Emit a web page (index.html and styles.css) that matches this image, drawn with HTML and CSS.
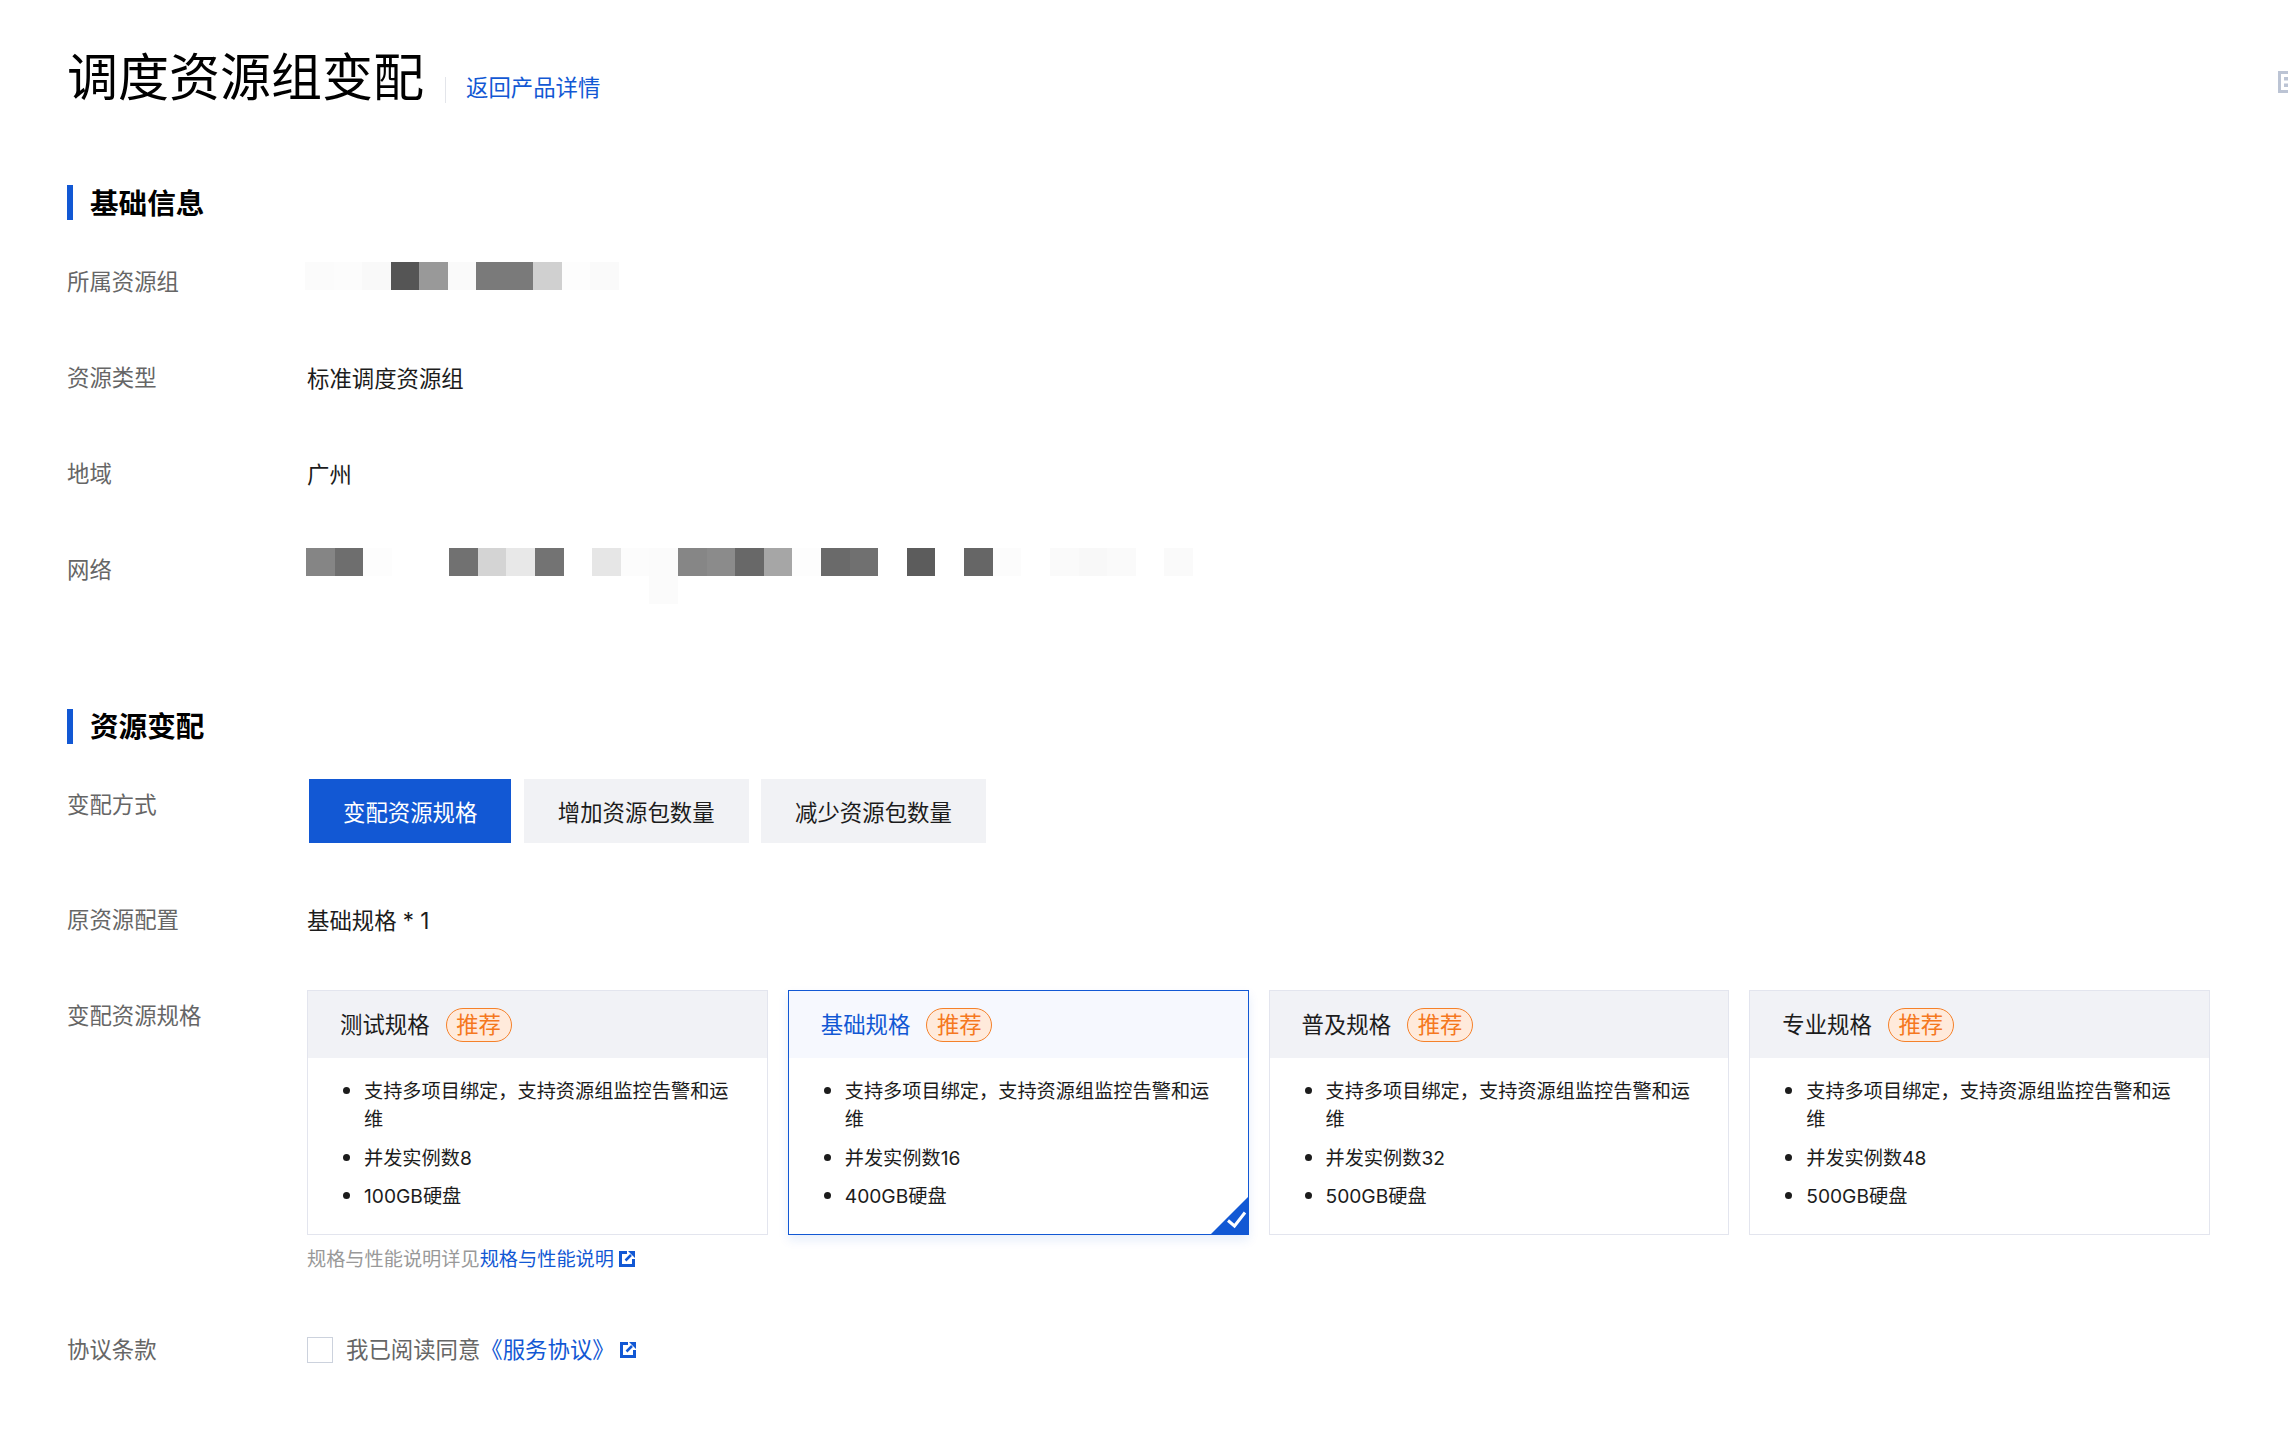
FILE: index.html
```html
<!DOCTYPE html>
<html lang="zh-CN">
<head>
    <meta charset="UTF-8">
    <meta name="viewport" content="width=device-width, initial-scale=1.0">
    <title>调度资源组变配</title>
    <link rel="stylesheet" href="styles.css">
</head>
<body>
    <svg class="side-icon" viewBox="0 0 10 22" aria-hidden="true">
        <path d="M10 1.5H1.5V20.5H10" fill="none" stroke="#bcc4d4" stroke-width="3"/>
        <rect x="6" y="6" width="4" height="3.5" fill="#bcc4d4"/>
        <rect x="6" y="12.5" width="4" height="3.5" fill="#bcc4d4"/>
    </svg>

    <!-- header -->
    <header class="page-head">
        <h1>调度资源组变配</h1>
        <span class="head-divider"></span>
        <a class="link" href="#">返回产品详情</a>
    </header>

    <!-- basic info -->
    <h2 class="section-title">基础信息</h2>
    <div class="row">
        <div class="label">所属资源组</div>
        <div class="value">
            <svg class="mosaic" width="314" height="28" viewBox="0 0 11 1" preserveAspectRatio="none" shape-rendering="crispEdges" aria-hidden="true">
                <rect x="0" width="1" height="1" fill="#fbfbfb"/>
                <rect x="1" width="1" height="1" fill="#fcfcfc"/>
                <rect x="2" width="1" height="1" fill="#f9f9f9"/>
                <rect x="3" width="1" height="1" fill="#555"/>
                <rect x="4" width="1" height="1" fill="#999"/>
                <rect x="5" width="1" height="1" fill="#fafafa"/>
                <rect x="6" width="2" height="1" fill="#7a7a7a"/>
                <rect x="8" width="1" height="1" fill="#d0d0d0"/>
                <rect x="9" width="1" height="1" fill="#fdfdfd"/>
                <rect x="10" width="1" height="1" fill="#fafafa"/>
            </svg>
        </div>
    </div>
    <div class="row">
        <div class="label">资源类型</div>
        <div class="value">标准调度资源组</div>
    </div>
    <div class="row">
        <div class="label">地域</div>
        <div class="value">广州</div>
    </div>
    <div class="row">
        <div class="label">网络</div>
        <div class="value">
            <svg class="mosaic mosaic-net" width="887" height="56" viewBox="0 0 31 2" preserveAspectRatio="none" shape-rendering="crispEdges" aria-hidden="true">
                <rect x="0" width="1" height="1" fill="#858585"/>
                <rect x="1" width="1" height="1" fill="#6e6e6e"/>
                <rect x="2" width="1" height="1" fill="#fdfdfd"/>
                <rect x="5" width="1" height="1" fill="#717171"/>
                <rect x="6" width="1" height="1" fill="#d4d4d4"/>
                <rect x="7" width="1" height="1" fill="#e8e8e8"/>
                <rect x="8" width="1" height="1" fill="#737373"/>
                <rect x="10" width="1" height="1" fill="#e6e6e6"/>
                <rect x="11" width="1" height="1" fill="#fcfcfc"/>
                <rect x="12" width="1" height="2" fill="#fbfbfb"/>
                <rect x="13" width="1" height="1" fill="#868686"/>
                <rect x="14" width="1" height="1" fill="#8b8b8b"/>
                <rect x="15" width="1" height="1" fill="#686868"/>
                <rect x="16" width="1" height="1" fill="#a6a6a6"/>
                <rect x="17" width="1" height="1" fill="#fdfdfd"/>
                <rect x="18" width="1" height="1" fill="#6a6a6a"/>
                <rect x="19" width="1" height="1" fill="#707070"/>
                <rect x="21" width="1" height="1" fill="#5c5c5c"/>
                <rect x="23" width="1" height="1" fill="#666"/>
                <rect x="24" width="1" height="1" fill="#fcfcfc"/>
                <rect x="26" width="1" height="1" fill="#fafafa"/>
                <rect x="27" width="1" height="1" fill="#f8f8f8"/>
                <rect x="28" width="1" height="1" fill="#fafafa"/>
                <rect x="30" width="1" height="1" fill="#fafafa"/>
            </svg>
        </div>
    </div>

    <!-- resource change -->
    <h2 class="section-title section-second">资源变配</h2>
    <div class="row row-mode">
        <div class="label label-top">变配方式</div>
        <div class="tabs">
            <button class="tab tab-active">变配资源规格</button>
            <button class="tab">增加资源包数量</button>
            <button class="tab">减少资源包数量</button>
        </div>
    </div>
    <div class="row row-origin">
        <div class="label">原资源配置</div>
        <div class="value">基础规格 * 1</div>
    </div>
    <div class="row row-spec">
        <div class="label label-top">变配资源规格</div>
        <div class="spec-wrap">
            <div class="cards">
                <div class="card">
                    <div class="card-head">测试规格<span class="tag">推荐</span></div>
                    <ul class="card-list">
                        <li>支持多项目绑定，支持资源组监控告警和运维</li>
                        <li>并发实例数8</li>
                        <li>100GB硬盘</li>
                    </ul>
                </div>
                <div class="card card-active">
                    <div class="card-head">基础规格<span class="tag">推荐</span></div>
                    <ul class="card-list">
                        <li>支持多项目绑定，支持资源组监控告警和运维</li>
                        <li>并发实例数16</li>
                        <li>400GB硬盘</li>
                    </ul>
                    <svg class="card-check" width="39" height="39" viewBox="0 0 39 39" aria-hidden="true">
                        <path d="M39 0V39H0z" fill="#1258d4"/>
                        <path d="M18 24.5L24.5 30L35 16.5" fill="none" stroke="#fff" stroke-width="3"/>
                    </svg>
                </div>
                <div class="card">
                    <div class="card-head">普及规格<span class="tag">推荐</span></div>
                    <ul class="card-list">
                        <li>支持多项目绑定，支持资源组监控告警和运维</li>
                        <li>并发实例数32</li>
                        <li>500GB硬盘</li>
                    </ul>
                </div>
                <div class="card">
                    <div class="card-head">专业规格<span class="tag">推荐</span></div>
                    <ul class="card-list">
                        <li>支持多项目绑定，支持资源组监控告警和运维</li>
                        <li>并发实例数48</li>
                        <li>500GB硬盘</li>
                    </ul>
                </div>
            </div>
            <p class="hint">规格与性能说明详见<a class="link" href="#">规格与性能说明</a>
                <svg class="ext-icon" width="16" height="16" viewBox="0 0 16 16" aria-hidden="true">
                    <path d="M8 1.5H1.5V14.5H14.5V8" fill="none" stroke="#1258d4" stroke-width="3"/>
                    <path d="M6.5 9.5L12 4" fill="none" stroke="#1258d4" stroke-width="2.5"/>
                    <path d="M9 0H16V7z" fill="#1258d4"/>
                </svg>
            </p>
        </div>
    </div>
    <div class="row row-agree">
        <div class="label">协议条款</div>
        <div class="value agree">
            <span class="checkbox"></span>
            <span class="agree-text">我已阅读同意</span><a class="link" href="#">《服务协议》</a>
            <svg class="ext-icon" width="16" height="16" viewBox="0 0 16 16" aria-hidden="true">
                <path d="M8 1.5H1.5V14.5H14.5V8" fill="none" stroke="#1258d4" stroke-width="3"/>
                <path d="M6.5 9.5L12 4" fill="none" stroke="#1258d4" stroke-width="2.5"/>
                <path d="M9 0H16V7z" fill="#1258d4"/>
            </svg>
        </div>
    </div>
</body>
</html>
```

FILE: styles.css
```css
* {
    box-sizing: border-box;
}
body {
    margin: 0;
    padding: 52px 78px 60px 67px;
    position: relative;
    background-color: #fff;
    color: #1c1c1c;
    font-family: Inter, "Noto Sans CJK SC", sans-serif;
    font-size: 22.4px;
}
.link {
    color: #1258d4;
    text-decoration: none;
}
.side-icon {
    position: absolute;
    top: 71px;
    right: 0;
    width: 10px;
    height: 22px;
}

/* header */
.page-head {
    display: flex;
    align-items: flex-end;
    height: 51px;
}
.page-head h1 {
    margin: 0;
    color: #000;
    font-size: 51px;
    font-weight: 400;
    line-height: 51px;
}
.head-divider {
    width: 1px;
    height: 26px;
    margin: 0 20px 0 21px;
    background-color: #e3e5ea;
}
.page-head .link {
    line-height: 30px;
}

/* section */
.section-title {
    height: 35px;
    margin: 82px 0 46px;
    padding-left: 17px;
    border-left: 6px solid #1258d4;
    color: #000;
    font-size: 28.6px;
    font-weight: 700;
    line-height: 37px;
}
.section-second {
    margin: 123px 0 35px;
    line-height: 35px;
}

/* form rows */
.row {
    display: grid;
    grid-template-columns: 240px 1fr;
    height: 32px;
    margin-bottom: 64px;
    line-height: 32px;
}
.label {
    color: #666;
}
.label-top {
    padding-top: 10px;
}
.value {
    padding-top: 1px;
}
.mosaic {
    display: block;
    margin: -5px 0 0 -2px;
}
.mosaic-net {
    margin: -7px 0 0 -1px;
}
.row-mode {
    height: 64px;
    margin-bottom: 61px;
}
.row-origin {
    margin-bottom: 54px;
}
.row-spec {
    height: auto;
    margin-bottom: 62px;
}

/* tabs */
.tabs {
    display: flex;
    gap: 12.5px;
    margin-left: 2px;
}
.tab {
    height: 64px;
    padding: 0 34px;
    border: none;
    background-color: #f1f2f5;
    color: #1c1c1c;
    font-family: inherit;
    font-size: 22.4px;
}
.tab-active {
    background-color: #1258d4;
    color: #fff;
}

/* spec cards */
.cards {
    display: grid;
    grid-template-columns: repeat(4, 1fr);
    gap: 20px;
}
.card {
    position: relative;
    height: 245px;
    border: 1px solid #e3e5ee;
}
.card-head {
    display: flex;
    align-items: center;
    height: 67px;
    padding-left: 32px;
    background-color: #f1f2f6;
}
.tag {
    width: 66px;
    height: 34px;
    margin-left: 16px;
    border: 1px solid #f5812a;
    border-radius: 17px;
    background-color: #ffeadb;
    color: #f5781e;
    line-height: 32px;
    text-align: center;
}
.card-list {
    margin: 0;
    padding: 19px 30px 0 56px;
    list-style: none;
    font-size: 19.2px;
    line-height: 28px;
}
.card-list li {
    position: relative;
    margin-bottom: 10.7px;
}
.card-list li::before {
    content: "";
    position: absolute;
    top: 10px;
    left: -21px;
    width: 7px;
    height: 7px;
    border-radius: 50%;
    background-color: #1c1c1c;
}
.card-active {
    border-color: #1258d4;
    box-shadow: 0 5px 10px rgba(18, 88, 212, 0.1);
}
.card-active .card-head {
    background-color: #f6f8fe;
    color: #1258d4;
}
.card-check {
    position: absolute;
    right: -1px;
    bottom: -1px;
}

.hint {
    display: flex;
    align-items: center;
    height: 28px;
    margin: 10px 0 0;
    color: #999;
    font-size: 19.2px;
    line-height: 28px;
}
.ext-icon {
    margin-left: 5px;
}

/* agreement */
.row-agree {
    margin-top: -1px;
}
.agree {
    display: flex;
    align-items: center;
    padding-top: 0;
}
.checkbox {
    width: 26px;
    height: 26px;
    margin-right: 13px;
    border: 1px solid #ccd2dd;
}
.agree-text {
    color: #666;
}
.agree .ext-icon {
    margin-left: 5px;
}
```
